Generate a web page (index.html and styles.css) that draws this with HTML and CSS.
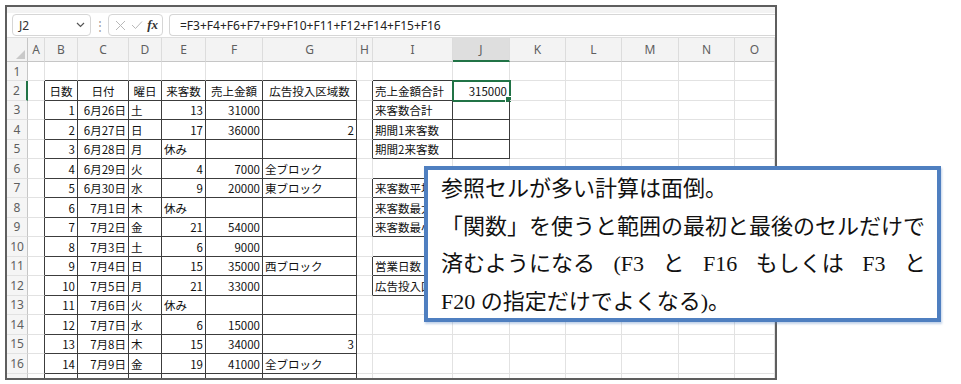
FILE: index.html
```html
<!DOCTYPE html>
<html lang="ja">
<head>
  <meta charset="UTF-8">
  <title>売上集計</title>
  <link rel="stylesheet" href="styles.css">
</head>
<body>

  <div class="frame">
    <div class="edge"></div>

    <!-- 数式バー -->
    <div class="fbar">
      <div class="namebox">
        <span>J2</span>
        <svg width="9" height="6" viewBox="0 0 9 6"><path d="M1 1 L4.5 4.5 L8 1" fill="none" stroke="#555" stroke-width="1.2"/></svg>
      </div>
      <span class="dots">⋮</span>
      <div class="fxbox">
        <svg width="11" height="11" viewBox="0 0 11 11"><path d="M1 1 L10 10 M10 1 L1 10" stroke="#b8b8b8" stroke-width="1"/></svg>
        <svg width="12" height="10" viewBox="0 0 12 10"><path d="M1 5 L4.5 8.5 L11 1.5" fill="none" stroke="#b8b8b8" stroke-width="1"/></svg>
        <span class="fx">fx</span>
      </div>
      <div class="formula">=F3+F4+F6+F7+F9+F10+F11+F12+F14+F15+F16</div>
    </div>

    <!-- シート -->
    <div class="sheet" id="sheet"></div>
  </div>

  <div class="callout">
    <div class="line">参照セルが多い計算は面倒。</div>
    <div class="line">「関数」を使うと範囲の最初と最後のセルだけで</div>
    <div class="line spread">
      <span>済むようになる</span><span>(F3</span><span>と</span><span>F16</span><span>もしくは</span><span>F3</span><span>と</span>
    </div>
    <div class="line">F20 の指定だけでよくなる)。</div>
  </div>

  <script>
    const cols = ["A","B","C","D","E","F","G","H","I","J","K","L","M","N","O"];

    const data = {
      2:  { B:"日数", C:"日付", D:"曜日", E:"来客数", F:"売上金額", G:"広告投入区域数", I:"売上金額合計", J:"315000" },
      3:  { B:"1",  C:"6月26日", D:"土", E:"13", F:"31000", I:"来客数合計" },
      4:  { B:"2",  C:"6月27日", D:"日", E:"17", F:"36000", G:"2", I:"期間1来客数" },
      5:  { B:"3",  C:"6月28日", D:"月", E:"休み", I:"期間2来客数" },
      6:  { B:"4",  C:"6月29日", D:"火", E:"4",  F:"7000",  G:"全ブロック" },
      7:  { B:"5",  C:"6月30日", D:"水", E:"9",  F:"20000", G:"東ブロック", I:"来客数平均" },
      8:  { B:"6",  C:"7月1日",  D:"木", E:"休み", I:"来客数最大" },
      9:  { B:"7",  C:"7月2日",  D:"金", E:"21", F:"54000", I:"来客数最小" },
      10: { B:"8",  C:"7月3日",  D:"土", E:"6",  F:"9000" },
      11: { B:"9",  C:"7月4日",  D:"日", E:"15", F:"35000", G:"西ブロック", I:"営業日数" },
      12: { B:"10", C:"7月5日",  D:"月", E:"21", F:"33000", I:"広告投入区域数" },
      13: { B:"11", C:"7月6日",  D:"火", E:"休み" },
      14: { B:"12", C:"7月7日",  D:"水", E:"6",  F:"15000" },
      15: { B:"13", C:"7月8日",  D:"木", E:"15", F:"34000", G:"3" },
      16: { B:"14", C:"7月9日",  D:"金", E:"19", F:"41000", G:"全ブロック" }
    };

    // 罫線で囲まれた範囲 [行開始, 行終了, 列開始, 列終了]
    const boxes = [[2,17,1,6], [2,5,8,9], [7,9,8,9], [11,12,8,9]];

    function inBox(r, c) {
      return boxes.some(b => r >= b[0] && r <= b[1] && c >= b[2] && c <= b[3]);
    }

    const sheet = document.getElementById("sheet");
    let html = '<div class="corner"><svg width="9" height="9" viewBox="0 0 9 9"><path d="M9 0 L9 9 L0 9 Z" fill="#c9c9c9"/></svg></div>';

    cols.forEach(c => {
      html += `<div class="colhead${c === "J" ? " active" : ""}">${c}</div>`;
    });

    for (let r = 1; r <= 17; r++) {
      html += `<div class="rowhead${r === 2 ? " active" : ""}">${r}</div>`;
      cols.forEach((c, i) => {
        const v = (data[r] && data[r][c]) || "";
        let cls = "cell";
        if (inBox(r, i) || inBox(r, i + 1)) cls += " br";
        if (inBox(r, i) || inBox(r + 1, i)) cls += " bb";
        if (r === 2 && i >= 1 && i <= 6) cls += " center";
        else if (/^\d+$/.test(v) || /月\d+日$/.test(v)) cls += " num";
        if (r === 2 && c === "J") cls += " sel";
        html += `<div class="${cls}">${v}${cls.includes("sel") ? '<span class="handle"></span>' : ""}</div>`;
      });
    }

    sheet.innerHTML = html;
  </script>
</body>
</html>
```

FILE: styles.css
```css
body { margin: 0; background: #fff; font-family: "Noto Sans", "Noto Sans CJK JP", sans-serif; }

.frame {
  margin: 5px 0 0 5px;
  width: 768px;
  height: 371px;
  border: 2px solid #5e5e5e;
  overflow: hidden;
}
.edge { height: 6px; background: #f3f3f3; }

.fbar {
  height: 24px;
  display: flex;
  align-items: center;
  padding-left: 5px;
  border-bottom: 1px solid #dedede;
}
.namebox {
  width: 79px;
  height: 22px;
  box-sizing: border-box;
  border: 1px solid #d6d6d6;
  border-radius: 4px;
  display: flex;
  align-items: center;
  justify-content: space-between;
  padding: 0 5px 0 6px;
  font-size: 12px;
  color: #333;
}
.dots { width: 17px; text-align: center; color: #a0a0a0; font-size: 12px; }
.fxbox {
  width: 55px;
  height: 22px;
  box-sizing: border-box;
  border: 1px solid #d6d6d6;
  border-radius: 4px;
  display: flex;
  align-items: center;
  justify-content: space-between;
  padding: 0 4px 0 6px;
}
.fx { font-family: "Liberation Serif", serif; font-style: italic; font-weight: bold; font-size: 13px; color: #333; }
.formula {
  margin-left: 6px;
  flex: 1;
  height: 22px;
  box-sizing: border-box;
  border: 1px solid #d6d6d6;
  border-right: none;
  border-radius: 4px 0 0 4px;
  padding-left: 10px;
  display: flex;
  align-items: center;
  font-size: 12px;
  color: #222;
}

.sheet {
  display: grid;
  grid-template-columns: 21px 17px 33px 51px 33px 44px 57px 94px 16px 80px 57px 56px 56px 57px 56px 40px;
  grid-template-rows: 24px 19px repeat(16, 19.5px);
  height: 340px;
  overflow: hidden;
}
.sheet > div { box-sizing: border-box; }

.corner {
  background: #f3f3f3;
  border-right: 1px solid #c6c6c6;
  border-bottom: 1px solid #c6c6c6;
  display: flex;
  align-items: flex-end;
  justify-content: flex-end;
  padding: 0 2px 2px 0;
}
.colhead {
  background: #f3f3f3;
  border-right: 1px solid #dcdcdc;
  border-bottom: 1px solid #c6c6c6;
  display: flex;
  align-items: center;
  justify-content: center;
  font-size: 12px;
  color: #5f5f5f;
}
.colhead.active { background: #dedede; border-bottom: 2px solid #217346; }
.rowhead {
  background: #f5f5f5;
  border-right: 1px solid #c6c6c6;
  border-bottom: 1px solid #e2e2e2;
  display: flex;
  align-items: center;
  justify-content: center;
  font-size: 12px;
  color: #5f5f5f;
}
.rowhead.active { border-right: 2px solid #217346; }

.cell {
  position: relative;
  border-right: 1px solid #e2e2e2;
  border-bottom: 1px solid #e2e2e2;
  display: flex;
  align-items: center;
  padding: 1px 2px 0 2px;
  font-family: "Noto Sans CJK JP", sans-serif;
  font-size: 11.5px;
  color: #111;
  white-space: nowrap;
}
.cell.br { border-right-color: #3c3c3c; }
.cell.bb { border-bottom-color: #3c3c3c; }
.cell.num { justify-content: flex-end; }
.cell.center { justify-content: center; }
.cell.sel { outline: 2px solid #217346; outline-offset: -1px; }
.handle {
  position: absolute;
  right: -3px;
  bottom: -3px;
  width: 5px;
  height: 5px;
  background: #217346;
  border: 1px solid #fff;
}

.callout {
  position: absolute;
  left: 424px;
  top: 166px;
  width: 517px;
  height: 156px;
  box-sizing: border-box;
  border: 4px solid #4f7fc0;
  background: #fff;
  box-shadow: 1px 2px 2px rgba(79, 127, 192, 0.35);
  padding: 0 11px 0 13px;
  font-family: "Liberation Serif", "Noto Sans CJK JP", serif;
  font-size: 22px;
  line-height: 37.5px;
  color: #111;
}
.line { white-space: nowrap; }
.line.spread { display: flex; justify-content: space-between; }
```
